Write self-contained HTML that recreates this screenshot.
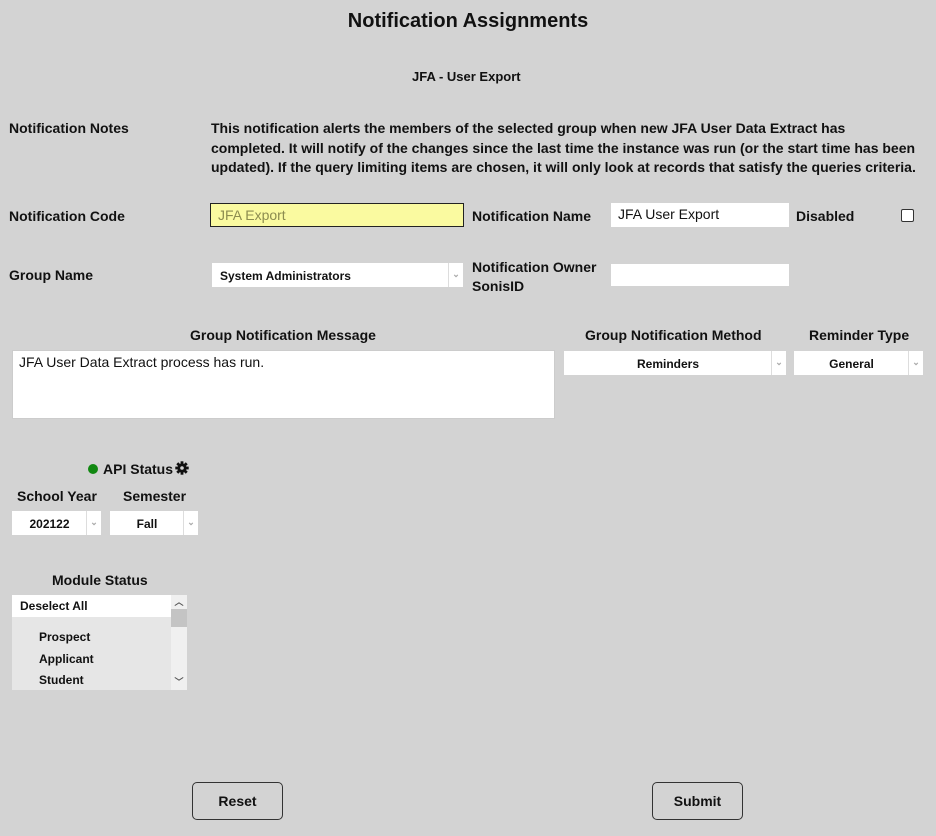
<!DOCTYPE html>
<html><head><meta charset="utf-8"><style>
body{margin:0;width:936px;height:836px;background:#d3d3d3;font-family:"Liberation Sans",sans-serif;color:#111;position:relative;overflow:hidden}
.a{position:absolute;white-space:nowrap}
b,.b{font-weight:bold}
.l{font-weight:bold;font-size:14px}
.in{position:absolute;background:#fff;box-sizing:border-box}
.sel{position:absolute;background:#fff;box-sizing:border-box;font-weight:bold;font-size:12px;text-align:center}
.sel .ar{position:absolute;right:0;top:0;bottom:0;width:14px;border-left:1px solid #ddd;color:#aaa;font-size:9px;line-height:22px;text-align:center}
.btn{position:absolute;border:1px solid #333;border-radius:5px;background:#d3d3d3;font-weight:bold;font-size:14px;text-align:center;line-height:36px;width:89px;height:36px}
</style></head><body>
<div class="a b" style="left:0;width:936px;text-align:center;top:10px;font-size:20px">Notification Assignments</div>
<div class="a b" style="left:412px;top:69px;font-size:13px">JFA - User Export</div>
<div class="a l" style="left:9px;top:120px">Notification Notes</div>
<div class="a b" style="left:211px;top:119px;font-size:14px;line-height:19.5px">This notification alerts the members of the selected group when new JFA User Data Extract has<br>completed. It will notify of the changes since the last time the instance was run (or the start time has been<br>updated). If the query limiting items are chosen, it will only look at records that satisfy the queries criteria.</div>
<div class="a l" style="left:9px;top:208px">Notification Code</div>
<div class="in" style="left:210px;top:203px;width:254px;height:24px;background:#fafaa0;border:1px solid #222;color:#8c8c50;font-size:14px;padding:3px 7px">JFA Export</div>
<div class="a l" style="left:472px;top:208px">Notification Name</div>
<div class="in" style="left:611px;top:203px;width:178px;height:24px;font-size:14px;padding:3px 7px">JFA User Export</div>
<div class="a l" style="left:796px;top:208px">Disabled</div>
<div class="in" style="left:901px;top:209px;width:13px;height:13px;border:1px solid #333;border-radius:2px"></div>
<div class="a l" style="left:9px;top:267px">Group Name</div>
<div class="sel" style="left:212px;top:263px;width:251px;height:24px;text-align:left;padding:6px 8px">System Administrators<span class="ar">⌄</span></div>
<div class="a l" style="left:472px;top:258px;line-height:19px">Notification Owner<br>SonisID</div>
<div class="in" style="left:611px;top:264px;width:178px;height:22px"></div>
<div class="a l" style="left:190px;top:327px">Group Notification Message</div>
<div class="in" style="left:12px;top:350px;width:543px;height:69px;border:1px solid #ccc;font-size:14px;padding:3px 6px">JFA User Data Extract process has run.</div>
<div class="a l" style="left:585px;top:327px">Group Notification Method</div>
<div class="sel" style="left:564px;top:351px;width:222px;height:24px;padding-top:6px;padding-right:14px">Reminders<span class="ar">⌄</span></div>
<div class="a l" style="left:809px;top:327px">Reminder Type</div>
<div class="sel" style="left:794px;top:351px;width:129px;height:24px;padding-top:6px;padding-right:14px">General<span class="ar">⌄</span></div>
<div class="a" style="left:88px;top:464px;width:10px;height:10px;border-radius:50%;background:#118811"></div>
<div class="a l" style="left:103px;top:461px">API Status</div>
<svg class="a" style="left:175px;top:461px" width="14" height="14" viewBox="0 0 14 14"><g fill="#111"><circle cx="7" cy="7" r="4.6"/><g id="t"><rect x="5.6" y="0.3" width="2.8" height="3" /><rect x="5.6" y="10.7" width="2.8" height="3"/></g><use href="#t" transform="rotate(45 7 7)"/><use href="#t" transform="rotate(90 7 7)"/><use href="#t" transform="rotate(135 7 7)"/></g><circle cx="7" cy="7" r="1.8" fill="#d3d3d3"/></svg>
<div class="a l" style="left:17px;top:488px">School Year</div>
<div class="a l" style="left:123px;top:488px">Semester</div>
<div class="sel" style="left:12px;top:511px;width:89px;height:24px;padding-top:6px;padding-right:14px">202122<span class="ar">⌄</span></div>
<div class="sel" style="left:110px;top:511px;width:88px;height:24px;padding-top:6px;padding-right:14px">Fall<span class="ar">⌄</span></div>
<div class="a l" style="left:52px;top:572px">Module Status</div>
<div class="a" style="left:12px;top:595px;width:175px;height:95px;background:#e6e6e6;font-weight:bold;font-size:12px">
<div style="background:#fff;height:22px;line-height:22px;padding-left:8px;width:151px">Deselect All</div>
<div style="position:absolute;left:27px;top:32px;line-height:21.5px">Prospect<br>Applicant<br>Student</div>
<div style="position:absolute;right:0;top:0;width:16px;height:95px;background:#f0f0f0;color:#555;font-size:9px;text-align:center">︿<div style="background:#c4c4c4;height:18px;margin-top:1px"></div><div style="position:absolute;bottom:2px;width:16px">﹀</div></div>
</div>
<div class="btn" style="left:192px;top:782px">Reset</div>
<div class="btn" style="left:652px;top:782px">Submit</div>
</body></html>
